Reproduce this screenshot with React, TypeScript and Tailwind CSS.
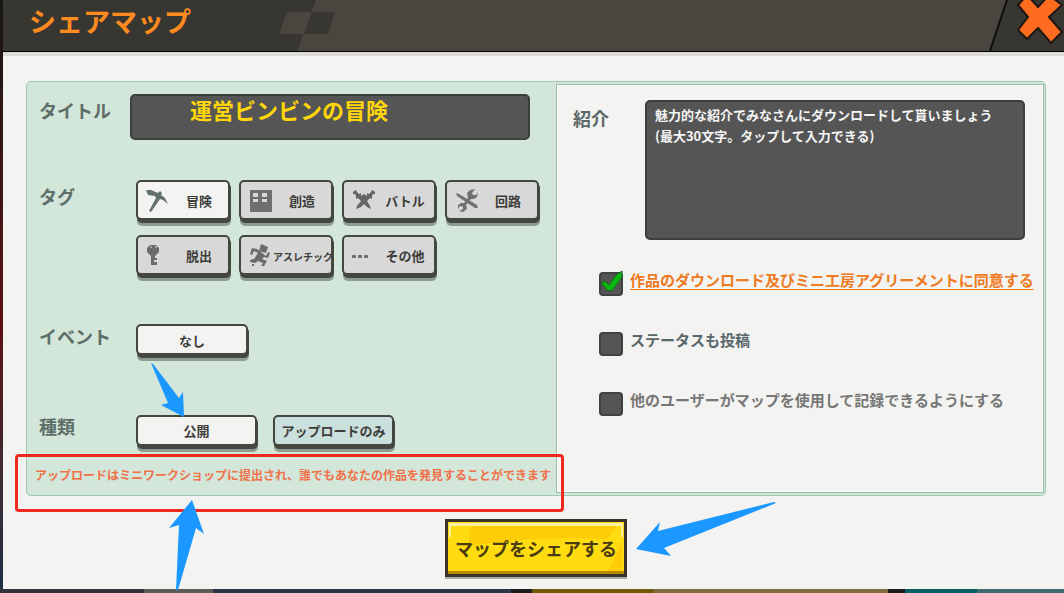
import { useState } from "react";
import type { ReactNode } from "react";
import { clsx } from "clsx";

const tags = [
    { id: 'adventure', label: '冒険', icon: <PickaxeIcon /> },
    { id: 'build', label: '創造', icon: <BuildingIcon /> },
    { id: 'battle', label: 'バトル', icon: <SwordsIcon /> },
    { id: 'circuit', label: '回路', icon: <ToolsIcon /> },
    { id: 'escape', label: '脱出', icon: <KeyIcon /> },
    { id: 'athletic', label: 'アスレチック', icon: <RunnerIcon />, small: true },
    { id: 'other', label: 'その他', icon: <DotsIcon /> },
];

function PickaxeIcon() {
    return (
        <svg viewBox="0 0 24 24" className="size-6 shrink-0 fill-[#61706e]">
            <path d="M0 1 L5 1 L12 4 L14 2 L16 4 L15 6 L19 9 L22 15 L17 11 L14 10 L5 23 L3 22 L10 9 L9 7 L2 6 Z" />
        </svg>
    );
}

function BuildingIcon() {
    return (
        <svg viewBox="0 0 24 24" className="size-6 shrink-0">
            <path className="fill-[#6f6f6f]" d="M1 1 H23 V23 H1 Z" />
            <path className="fill-[#d8d8d8]" d="M4 4 H9 V8 H4 Z M13 4 H18 V8 H13 Z M4 10 H9 V13 H4 Z M13 10 H18 V13 H13 Z" />
        </svg>
    );
}

function SwordsIcon() {
    return (
        <svg viewBox="0 0 24 24" className="size-6 shrink-0 fill-[#656565]">
            <path d="M1 3 L4 1 L5 3 L7 5 L9 4 L9 7 L15 12 L18 17 L19 20 L15 18 L6 9 L4 10 L4 7 L3 5 L1 5 Z" />
            <path d="M23 3 L20 1 L19 3 L17 5 L15 4 L15 7 L9 12 L5 17 L4 20 L9 18 L18 9 L20 10 L20 7 L21 5 L23 5 Z" />
            <path d="M9 7 L12 5 L15 7 V12 H9 Z" />
        </svg>
    );
}

function ToolsIcon() {
    return (
        <svg viewBox="0 0 24 24" className="size-6 shrink-0 fill-[#717171]">
            <path d="M1 4 L4 5 L22 16 L23 19 L20 19 L11 13 L2 7 Z" />
            <path d="M12 4 L15 1 L20 0 L17 4 L18 6 L21 6 L23 3 L22 8 L19 10 L16 10 L11 16 L12 20 L8 23 L4 22 L8 20 L8 18 L5 17 L3 20 L3 16 L6 14 L9 14 L13 9 Z" />
        </svg>
    );
}

function KeyIcon() {
    return (
        <svg viewBox="0 0 24 24" className="size-6 shrink-0">
            <path className="fill-[#6b6b6b]" d="M4 1 H10 L13 4 V8 L10 11 L9 12 V14 H11 V16 H8 V18 H11 V21 H5 V12 L1 8 V4 Z" />
            <path className="fill-[#a5a5a5]" d="M4 2 H6 V4 H4 Z M9 2 H11 V4 H9 Z" />
        </svg>
    );
}

function RunnerIcon() {
    return (
        <svg viewBox="0 0 24 24" className="size-6 shrink-0 fill-[#6b6b6b]">
            <path d="M12 0 L19 3 L17 9 L10 7 Z" />
            <path d="M3 4 L8 5 L13 9 L17 12 L19 8 L21 9 L19 14 L15 13 L13 15 L18 17 L15 22 L12 22 L14 19 L9 17 L6 19 L1 18 L1 16 L5 15 L9 9 L5 7 L3 11 L1 10 Z" />
            <path d="M3 20 H5 V22 H3 Z" />
        </svg>
    );
}

function DotsIcon() {
    return (
        <svg viewBox="0 0 24 24" className="size-6 shrink-0 fill-[#6b6b6b]">
            <rect x="0" y="11" width="4" height="3" rx="1" />
            <rect x="6" y="11" width="4" height="3" rx="1" />
            <rect x="12" y="11" width="4" height="3" rx="1" />
        </svg>
    );
}

function CloseIcon() {
    return (
        <svg viewBox="0 0 50 48" className="h-12 w-[50px]">
            <path
                d="M4 5 L13 -5 L24 7 L35 -5 L48 5 L35 17 L48 32 L37 43 L24 28 L13 39 L4 30 L14 17 Z"
                className="fill-[#ff6b1f] stroke-[#1d1812] stroke-2"
                strokeLinejoin="round"
            />
        </svg>
    );
}

// The blue pointers lie over the form
function Arrow({ className, viewBox, d }: { className: string; viewBox: string; d: string }) {
    return (
        <svg viewBox={viewBox} className={clsx("pointer-events-none absolute fill-[#1a98ff]", className)}>
            <path d={d} />
        </svg>
    );
}

const raised = "rounded-[5px] border-2 border-[#43473f] shadow-[1px_3px_0_#43473f,1px_6px_0_#8d9b92]";

function FieldRow({ label, children, className }: { label: string; children: ReactNode; className?: string }) {
    return (
        <div className={clsx("flex", className)}>
            <div className="w-[97px] shrink-0 text-lg leading-8 text-[#5d6d68]">{label}</div>
            {children}
        </div>
    );
}

function Check({ id, checked, onChange, children }: { id: string; checked: boolean; onChange: () => void; children: ReactNode }) {
    return (
        <div className="flex h-6 items-start gap-[7px]">
            <span className="relative mt-1 size-6 shrink-0">
                <input
                    id={id}
                    type="checkbox"
                    checked={checked}
                    onChange={onChange}
                    className="block size-6 appearance-none rounded-[4px] border-2 border-[#414141] bg-[#555555]"
                />
                {checked && (
                    <svg viewBox="0 0 24 26" className="pointer-events-none absolute -top-[2px] left-0 h-[26px] w-6">
                        <path d="M2 13 L6 11 L10 15 L17 5 L23 1 V7 L14 20 L9 21 Z" className="fill-[#0ab512] stroke-[#17631a]" />
                    </svg>
                )}
            </span>
            {children}
        </div>
    );
}

export default function App() {
    const [tag, setTag] = useState('adventure');
    const [kind, setKind] = useState('public');
    const [title, setTitle] = useState('運営ビンビンの冒険');
    const [intro, setIntro] = useState('');
    const [agree, setAgree] = useState(true);
    const [postStatus, setPostStatus] = useState(false);
    const [allowRecord, setAllowRecord] = useState(false);

    return (
        <div className="relative flex min-h-screen flex-col overflow-hidden bg-[#1e2233] font-['Noto_Sans_CJK_JP',sans-serif] font-bold">
            <div className="flex grow">
                <div className="w-[3px] shrink-0 bg-linear-to-b from-[#151515] via-[#5c0d12] via-55% to-[#1c3045]" />
                <div className="flex min-w-0 grow flex-col bg-[#f3f3f1]">
                    <header className="relative flex h-[52px] items-start justify-between border-b border-black bg-[#383631]">
                        <svg viewBox="0 0 1061 51" preserveAspectRatio="none" className="absolute inset-0 h-full w-full">
                            <path d="M313 0 H1003 L986 51 H294 Z" fill="#49463f" />
                            <path d="M284 12 H309 L301 34 H276 Z" fill="#49463f" />
                            <path d="M309 12 H332 L325 34 H301 Z" fill="#383631" />
                            <path d="M1004 0 L987 51" stroke="#0d0d0b" strokeWidth="2" />
                        </svg>
                        <h1 className="relative pl-[26px] text-[27px] leading-[42px] text-[#ff8a1f]">シェアマップ</h1>
                        <button aria-label="閉じる" className="relative">
                            <CloseIcon />
                        </button>
                    </header>
                    <div className="h-1 bg-[#dddbd9]" />

                    <main className="flex grow flex-col items-center pt-[25px] pr-[18px] pl-[23px]">
                        <div className="flex w-full rounded-[5px] border border-[#9cc9b0] bg-[#d2e6da]">
                            <section className="w-[529px] shrink-0 pt-3 pb-2 pl-3">
                                <div className="flex h-[86px]">
                                    <label htmlFor="title" className="w-[91px] shrink-0 text-lg leading-8 text-[#5d6d68]">タイトル</label>
                                    <input
                                        id="title"
                                        value={title}
                                        onChange={e => setTitle(e.target.value)}
                                        className="h-[46px] w-[400px] rounded-[5px] border-2 border-[#3c403c] bg-[#555555] pb-4 pl-[58px] text-[22px] leading-7 text-[#ffd60a]"
                                    />
                                </div>
                                <FieldRow label="タグ" className="h-[140px]">
                                    <div className="grid grid-cols-4 content-start gap-x-[9px] gap-y-[15px]">
                                        {tags.map(t => (
                                            <button
                                                key={t.id}
                                                onClick={() => setTag(t.id)}
                                                className={clsx(
                                                    "flex h-10 w-[94px] items-center overflow-hidden whitespace-nowrap pt-[2px] pl-2 text-[#3d3d3a]",
                                                    raised,
                                                    tag === t.id ? "bg-[#f3f3f1]" : "bg-[#d8d8d8]"
                                                )}
                                            >
                                                {t.icon}
                                                <span className={t.small ? "text-[10px]" : "grow text-center text-[13px]"}>{t.label}</span>
                                            </button>
                                        ))}
                                    </div>
                                </FieldRow>
                                <FieldRow label="イベント" className="h-[90px]">
                                    <button className={clsx("mt-1 h-[31px] w-28 bg-[#f3f3f1] pt-[2px] text-[13px] text-[#3d3d3a]", raised)}>なし</button>
                                </FieldRow>
                                <FieldRow label="種類" className="h-[53px]">
                                    <div className="flex gap-4 pt-[5px] text-[13px] text-[#3d3d3a]">
                                        <button
                                            onClick={() => setKind('public')}
                                            className={clsx("h-[31px] w-[121px]", raised, kind === 'public' ? "bg-[#f3f3f1]" : "bg-[#cbdfdd]")}
                                        >
                                            公開
                                        </button>
                                        <button
                                            onClick={() => setKind('upload')}
                                            className={clsx("h-[31px] w-[121px]", raised, kind === 'upload' ? "bg-[#f3f3f1]" : "bg-[#cbdfdd]")}
                                        >
                                            アップロードのみ
                                        </button>
                                    </div>
                                </FieldRow>
                                <p className="-ml-1 whitespace-nowrap text-xs leading-6 text-[#f07048]">
                                    アップロードはミニワークショップに提出され、誰でもあなたの作品を発見することができます
                                </p>
                            </section>

                            <section className="my-[2px] mr-[1px] min-w-0 grow border border-[#9cb9a8] bg-[#f3f3f1] pt-[15px] pr-[18px] pl-4 inset-ring inset-ring-white">
                                <div className="flex">
                                    <label htmlFor="intro" className="w-[72px] shrink-0 text-lg leading-9 text-[#5d6866]">紹介</label>
                                    <textarea
                                        id="intro"
                                        value={intro}
                                        onChange={e => setIntro(e.target.value)}
                                        placeholder={"魅力的な紹介でみなさんにダウンロードして貰いましょう\n(最大30文字。タップして入力できる)"}
                                        className="h-[140px] min-w-0 grow resize-none rounded-[5px] border-2 border-[#3e3e3e] bg-[#555555] px-2 py-[2px] text-[13px] leading-[21px] text-white placeholder:text-[#f5f5f5]"
                                    />
                                </div>
                                <div className="mt-7 -mr-4 flex flex-col gap-9 pl-[26px] text-[15px] leading-6 whitespace-nowrap">
                                    <Check id="agree" checked={agree} onChange={() => setAgree(!agree)}>
                                        <label htmlFor="agree">
                                            <a href="#agreement" className="text-[#ee7a22] underline decoration-1 underline-offset-3 [text-decoration-skip-ink:none]">作品のダウンロード及びミニ工房アグリーメントに同意する</a>
                                        </label>
                                    </Check>
                                    <Check id="status" checked={postStatus} onChange={() => setPostStatus(!postStatus)}>
                                        <label htmlFor="status" className="text-[#59676a]">ステータスも投稿</label>
                                    </Check>
                                    <Check id="record" checked={allowRecord} onChange={() => setAllowRecord(!allowRecord)}>
                                        <label htmlFor="record" className="text-[#777777]">他のユーザーがマップを使用して記録できるようにする</label>
                                    </Check>
                                </div>
                            </section>
                        </div>

                        <button className="relative mt-[23px] mb-[10px] h-[58px] w-[182px] border-3 border-[#3a3428] bg-[#ffdc10] text-lg text-[#4a3c10] shadow-[0_2px_0_#a9a9a6]">
                            <svg viewBox="0 0 176 52" preserveAspectRatio="none" className="absolute inset-0 h-full w-full">
                                <path d="M24 3 H170 L160 17 Q80 14 19 24 Z" fill="#ffcd08" />
                                <path d="M174 20 V49 H160 Z" fill="#ffcd08" />
                                <path d="M1 1 H175 V15 H173 V4 H3 V15 H1 Z" fill="#fff0a0" />
                                <path d="M0 49 H176 V52 H0 Z" fill="#b98a09" />
                            </svg>
                            <span className="relative">マップをシェアする</span>
                        </button>
                    </main>
                </div>
            </div>
            <div className="flex h-1 shrink-0">
                <div className="w-[13.5%] bg-[#32343a]" />
                <div className="w-[6.5%] bg-[#5b5b58]" />
                <div className="w-[28%] bg-[#2a3747]" />
                <div className="w-[2%] bg-[#1b1b20]" />
                <div className="w-[11.5%] bg-[#6f5a05]" />
                <div className="w-[22%] bg-[#7f6c3b]" />
                <div className="w-[1.6%] bg-[#1b1b20]" />
                <div className="w-[6.7%] bg-[#075f65]" />
                <div className="grow bg-[#3f6a6e]" />
            </div>

            <div className="pointer-events-none absolute top-[454px] left-[15px] h-[58px] w-[549px] rounded-[4px] border-3 border-[#ee2a1f]" />
            <Arrow className="top-[363px] left-[151px] h-[55px] w-[34px]" viewBox="0 0 34 55" d="M0 0 L2 1 L28 35 L32 29 L33 54 L10 42 L17 40 Z" />
            <Arrow className="top-[500px] left-[168px] h-[90px] w-[37px]" viewBox="0 0 37 90" d="M24 0 L36 34 L28 28 L10 90 L8 90 L11 25 L1 28 Z" />
            <Arrow className="top-[501px] left-[636px] h-[55px] w-[141px]" viewBox="0 0 141 55" d="M0 48 L24 21 L22 30 L138 1 L140 2 L28 47 L35 55 Z" />
        </div>
    );
}
